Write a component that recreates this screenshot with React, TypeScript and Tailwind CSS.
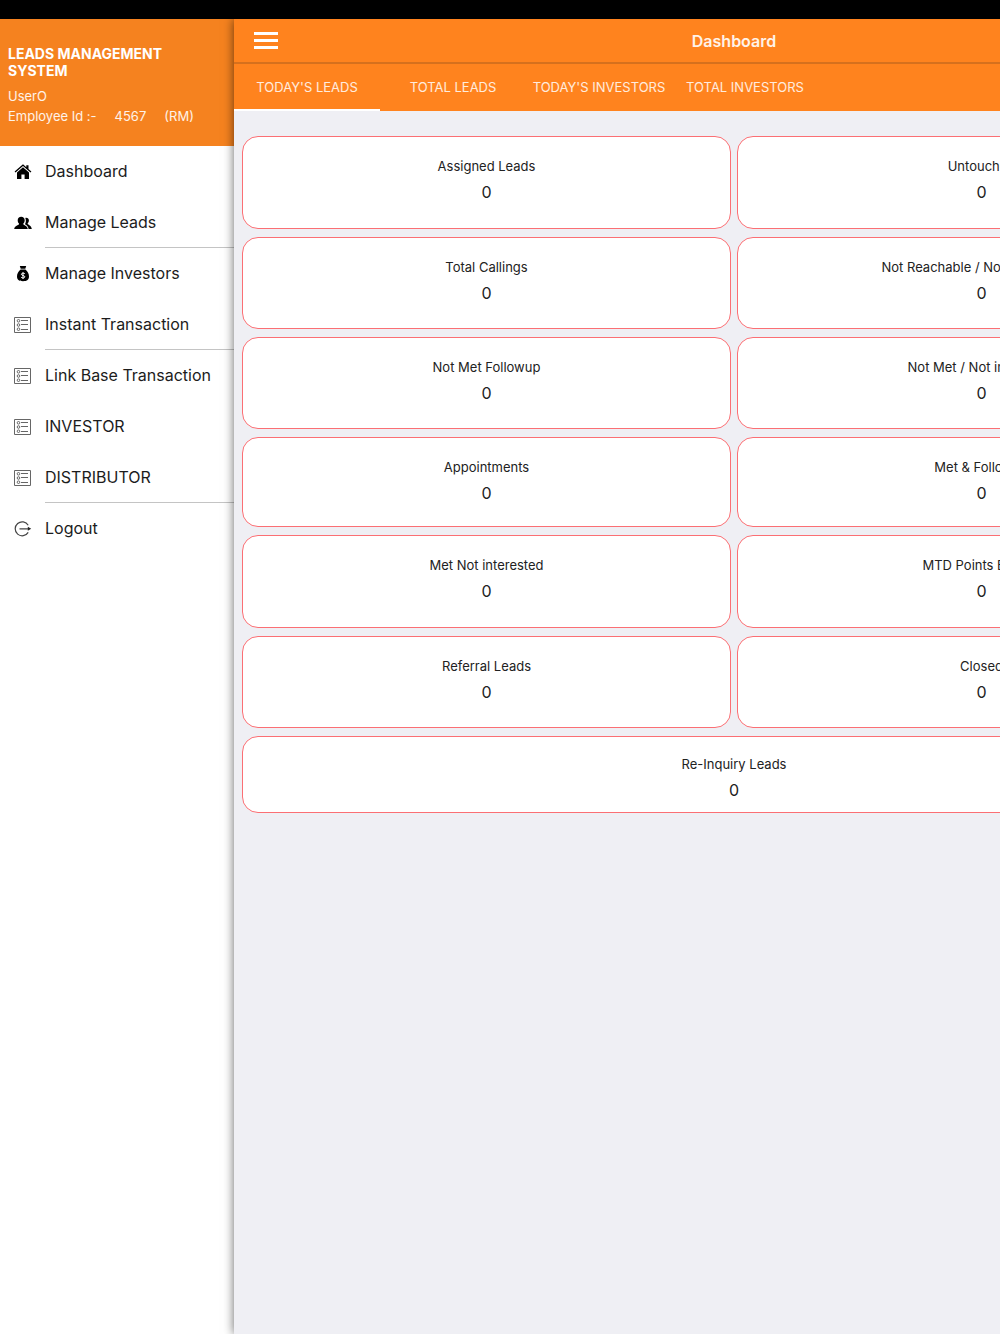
import type { ReactNode } from "react";

const HomeIcon = () => (
  <svg viewBox="0 0 18 18" className="size-[18px]" fill="currentColor">
    <path d="M9 1.2.6 8.600l.9 1L9 3l7.500 6.600.9-1-2.900-2.500V2.200h-2.200v2z" />
    <path d="M9 4.200 3 9.500V16h4.400v-4.400h3.200V16H15V9.500z" />
  </svg>
);

const PeopleIcon = () => (
  <svg viewBox="0 0 18 18" className="size-[18px]" fill="currentColor">
    <path d="M7.200 2.800c2.100 0 3.500 1.500 3.500 3.500 0 1.400-.6 2.600-1.400 3.200v.8c.4.9 4 1.300 4.500 4.700H.2c.5-3.400 4.400-3.800 4.800-4.700v-.8C4.200 8.900 3.700 7.700 3.700 6.300c0-2 1.400-3.500 3.500-3.500z" />
    <path d="M11.300 3.900c2-.5 3.600.7 3.600 2.600 0 1.200-.5 2.100-1.200 2.700v.8c.4.8 3.600 1.400 4.100 5h-3.200c-.4-2.900-2.500-4-3.700-4.700 1-1.500 1.400-4.200.4-6.400z" />
  </svg>
);

const MoneyBagIcon = () => (
  <svg viewBox="0 0 18 18" className="size-[18px]">
    <path d="M5.800 1h6.400l-.9 2.800H6.700z" fill="currentColor" />
    <path d="M6.600 4.600h4.800c2.300 1.900 3.600 4.300 3.600 7 0 3.100-1.700 4.700-6 4.700s-6-1.600-6-4.700c0-2.700 1.300-5.100 3.600-7z" fill="currentColor" />
    <path d="M10.800 8.700C10.200 8 7.400 7.800 7.400 9.300c0 1.500 3.400.9 3.400 2.500 0 1.500-2.900 1.400-3.600.5M9 7.200v6.800" fill="none" stroke="white" strokeWidth="1" />
  </svg>
);

const ListIcon = () => (
  <svg viewBox="0 0 18 18" className="size-[18px]" fill="none" stroke="#666" strokeWidth="1">
    <path d="M.5 1.500h16v15H.500z" />
    <circle cx="4.500" cy="4.800" r="1.300" />
    <circle cx="4.500" cy="9" r="1.300" />
    <circle cx="4.500" cy="13.200" r="1.300" />
    <path d="M7 4.500h7M7 8.500h7M7 13.500h7" />
  </svg>
);

const LogoutIcon = () => (
  <svg viewBox="0 0 18 18" className="size-[18px]" fill="none" stroke="#444" strokeWidth="1.200">
    <path d="M14.200 5.200a7 7 0 1 0 0 7.200M5.500 8.800h9.500" />
    <path d="m13.800 6.800 3.400 2-3.400 2z" fill="#222" stroke="none" />
  </svg>
);

const menu: { label: string; icon: ReactNode; divider?: boolean }[] = [
  { label: "Dashboard", icon: <HomeIcon /> },
  { label: "Manage Leads", icon: <PeopleIcon />, divider: true },
  { label: "Manage Investors", icon: <MoneyBagIcon /> },
  { label: "Instant Transaction", icon: <ListIcon />, divider: true },
  { label: "Link Base Transaction", icon: <ListIcon /> },
  { label: "INVESTOR", icon: <ListIcon /> },
  { label: "DISTRIBUTOR", icon: <ListIcon />, divider: true },
  { label: "Logout", icon: <LogoutIcon /> },
];

const tabs = ["TODAY'S LEADS", "TOTAL LEADS", "TODAY'S INVESTORS", "TOTAL INVESTORS"];

const stats = [
  "Assigned Leads",
  "Untouched",
  "Total Callings",
  "Not Reachable / Not Responding",
  "Not Met Followup",
  "Not Met / Not interested",
  "Appointments",
  "Met & Followup",
  "Met Not interested",
  "MTD Points Earned",
  "Referral Leads",
  "Closed",
];

function StatCard({ label, className = "" }: { label: string; className?: string }) {
  return (
    <div className={`rounded-2xl border border-[#fb6f74] bg-white text-center text-[#222] ${className}`}>
      <h2 className="text-[13px] leading-5">{label}</h2>
      <p className="mt-1 text-base leading-6">0</p>
    </div>
  );
}

function Sidebar() {
  return (
    <aside className="w-[234px] shrink-0 bg-white">
      <header className="bg-[#f5821f] px-2 pt-[26px] pb-5 text-[13px] leading-5 text-white/90">
        <h1 className="max-w-44 text-sm leading-[17px] font-bold text-white">LEADS MANAGEMENT SYSTEM</h1>
        <p className="mt-[7px]">UserO</p>
        <p className="flex gap-[18px]">
          <span>Employee Id :-</span>
          <span>4567</span>
          <span>(RM)</span>
        </p>
      </header>
      <nav>
        {menu.map((item) => (
          <a key={item.label} href="#" className="flex h-[51px] items-center pl-[14px] text-[#1c1c1c]">
            <span className="w-[31px] text-black">{item.icon}</span>
            <span
              className={`flex h-full flex-1 items-center border-b text-base ${
                item.divider ? "border-[#c4c4c4]" : "border-transparent"
              }`}
            >
              {item.label}
            </span>
          </a>
        ))}
      </nav>
    </aside>
  );
}

export default function App() {
  return (
    <div className="flex min-h-screen flex-col overflow-hidden bg-white font-['Inter','Liberation_Sans',sans-serif]">
      <div className="h-[19px] bg-black" />
      <div className="flex flex-1">
        <Sidebar />

        {/* full-width page, pushed aside by the open drawer */}
        <main className="w-screen shrink-0 bg-[#efeff4] shadow-[0_0_10px_rgba(0,0,0,0.6)] [clip-path:inset(0_0_0_-20px)]">
          <div className="grid h-[45px] grid-cols-[1fr_auto_1fr] items-center border-b-2 border-[#d6701d] bg-[#ff831e] px-5 text-white">
            <button aria-label="Menu" className="flex w-6 flex-col gap-1">
              <span className="h-[3px] bg-white" />
              <span className="h-[3px] bg-white" />
              <span className="h-[3px] bg-white" />
            </button>
            <h2 className="text-base font-semibold text-white/90">Dashboard</h2>
          </div>

          <div className="flex bg-[#ff831e] text-[13px] text-white/85">
            {tabs.map((tab, index) => (
              <button
                key={tab}
                className={`h-[47px] w-[146px] border-y-2 border-t-transparent whitespace-nowrap ${
                  index === 0 ? "border-b-white" : "border-b-transparent"
                }`}
              >
                {tab}
              </button>
            ))}
          </div>

          <div className="grid grid-cols-2 grid-rows-[93px_92px_92px_90px_93px_92px_auto] gap-x-[6px] gap-y-2 px-2 pt-[25px]">
            {stats.map((label) => (
              <StatCard key={label} label={label} className="pt-[19px]" />
            ))}
            <StatCard label="Re-Inquiry Leads" className="col-span-2 pt-[17px] pb-[10px]" />
          </div>
        </main>
      </div>
    </div>
  );
}
